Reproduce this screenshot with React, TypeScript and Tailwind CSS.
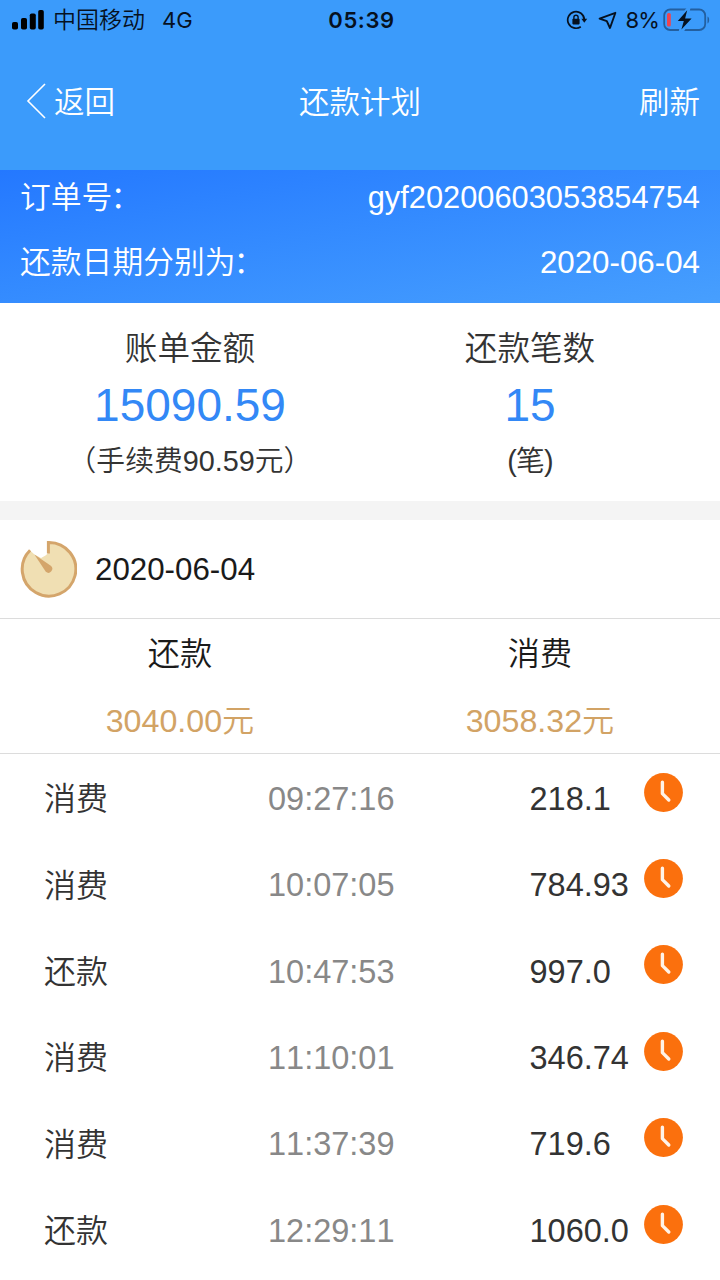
const records = [
  { type: "消费", time: "09:27:16", amount: "218.1" },
  { type: "消费", time: "10:07:05", amount: "784.93" },
  { type: "还款", time: "10:47:53", amount: "997.0" },
  { type: "消费", time: "11:10:01", amount: "346.74" },
  { type: "消费", time: "11:37:39", amount: "719.6" },
  { type: "还款", time: "12:29:11", amount: "1060.0" },
];

function SignalIcon() {
  return (
    <svg width="32" height="20" viewBox="0 0 32 20">
      <rect x="0" y="12" width="6" height="7.5" rx="1.8" />
      <rect x="9" y="8" width="6" height="11.5" rx="1.8" />
      <rect x="17.8" y="3.5" width="6" height="16" rx="1.8" />
      <rect x="26.2" y="0" width="5.6" height="19.5" rx="1.8" />
    </svg>
  );
}

function LockIcon() {
  return (
    <svg width="22" height="20" viewBox="0 0 22 20" fill="none" stroke="#06111f" strokeWidth="1.7">
      <path d="M18.3 9.5A8.3 8.3 0 1 0 14.8 16.7" />
      <path d="M15.4 8.8h5.8l-2.9 4z" fill="#06111f" stroke="none" />
      <rect x="6.4" y="8.8" width="7.2" height="5.6" rx="0.8" fill="#06111f" stroke="none" />
      <path d="M7.9 9V7.3a2.1 2.1 0 0 1 4.2 0V9" strokeWidth="1.4" />
    </svg>
  );
}

function LocationIcon() {
  return (
    <svg width="19" height="19" viewBox="0 0 19 19" fill="none" stroke="#06111f" strokeWidth="1.9" strokeLinejoin="round">
      <path d="M17.4 1.8 1.6 7.6l7.2 2.6 3.2 6.8z" />
    </svg>
  );
}

function BatteryIcon() {
  return (
    <svg width="48" height="24" viewBox="0 0 48 24">
      <rect x="1.2" y="1.5" width="41" height="20.5" rx="6" fill="none" stroke="#235f9f" strokeWidth="1.8" />
      <path d="M44.5 8.5c2.2.9 2.2 6 0 6.9z" fill="#235f9f" />
      <rect x="4" y="5" width="3.8" height="13.6" rx="1.6" fill="#ee4450" />
      <path d="M23.5 0 13 13.6h5.2L15.5 24h5L30 9.8h-5L27.5 0z" fill="#3b9bfb" />
      <path d="M24.2 2.2 14.8 13h6L18.4 21.6 28.6 10.4h-6.5z" fill="#06111f" />
    </svg>
  );
}

function TimerIcon() {
  return (
    <svg width="58" height="58" viewBox="0 0 58 58">
      <path
        d="M29.4 13V2.4A26.8 26.8 0 1 1 10.8 10.2L15.5 14.5 22 18 26.5 15.5z"
        fill="#f0dfb3"
      />
      <path
        d="M29.4 13.5V2.4A26.8 26.8 0 1 1 11.1 10.2"
        fill="none"
        stroke="#d4a56b"
        strokeWidth="3"
      />
      <path d="M15.4 14.6 31.8 25.8a3.9 3.9 0 0 1-5 6z" fill="#d4a56b" />
    </svg>
  );
}

function ClockIcon() {
  return (
    <svg width="39" height="39" viewBox="0 0 39 39">
      <circle cx="19.5" cy="19.5" r="19.4" fill="#fb700d" />
      <path
        d="M18.4 9.2v11.4l6.4 6.4"
        fill="none"
        stroke="#fff3e8"
        strokeWidth="3.4"
        strokeLinecap="round"
        strokeLinejoin="round"
      />
    </svg>
  );
}

export default function App() {
  return (
    <main className="flex h-[1280px] w-[720px] flex-col overflow-hidden bg-white font-['Liberation_Sans','Noto_Sans_CJK_SC',sans-serif] font-[350] text-[#333] [font-kerning:none]">
      <header className="h-[170px] bg-[#3b9bfb]">
        <div className="flex h-10 items-center pl-3 pr-[9px] font-['Inter','Noto_Sans_CJK_SC',sans-serif] font-normal text-[#06111f]">
          <div className="flex flex-1 items-center">
            <SignalIcon />
            <span className="ml-[9px] text-[23px] font-[350] leading-10">中国移动</span>
            <span className="ml-[17px] text-[22px] leading-10">4G</span>
          </div>
          <span className="text-[22px] font-semibold leading-10 tracking-[0.6px]">05:39</span>
          <div className="flex flex-1 items-center justify-end">
            <LockIcon />
            <span className="ml-2.5 mr-2">
              <LocationIcon />
            </span>
            <span className="mr-1 text-[22px] leading-10 tracking-[-0.8px]">8%</span>
            <BatteryIcon />
          </div>
        </div>
        <nav className="flex h-[126px] items-center px-5 text-[30.5px] text-white">
          <div className="flex flex-1 items-center">
            <svg className="mb-1" width="34" height="38" viewBox="0 0 34 38" fill="none" stroke="#fff" strokeWidth="1.6">
              <path d="M25 2 8 19l17 17" />
            </svg>
            <span>返回</span>
          </div>
          <h1 className="font-[350]">还款计划</h1>
          <span className="flex-1 text-right">刷新</span>
        </nav>
      </header>

      <section className="h-[133px] bg-linear-to-br from-[#2478ff] to-[#479ffe] px-5 pt-0.5 text-[30.8px] text-white">
        <div className="flex h-[53px] items-center justify-between">
          <span>
            订单号<span className="-ml-0.5">：</span>
          </span>
          <span>gyf20200603053854754</span>
        </div>
        <div className="flex h-[76px] items-center justify-between">
          <span>
            还款日期分别为<span className="-ml-0.5">：</span>
          </span>
          <span className="text-[31.3px]">2020-06-04</span>
        </div>
      </section>

      <section className="grid h-[198px] grid-cols-2 px-5 text-center">
        <div className="flex flex-col pt-[22px]">
          <span className="text-[32.6px] leading-[48px]">账单金额</span>
          <span className="text-[46px] leading-[64px] text-[#3388f6]">15090.59</span>
          <span className="text-[28.8px] leading-[48px]">（手续费90.59元）</span>
        </div>
        <div className="flex flex-col pt-[22px]">
          <span className="text-[32.6px] leading-[48px]">还款笔数</span>
          <span className="text-[46px] leading-[64px] text-[#3388f6]">15</span>
          <span className="text-[28.8px] leading-[48px] tracking-[-0.8px]">(笔)</span>
        </div>
      </section>

      <div className="h-[19px] bg-[#f4f4f4]" />

      <section className="flex h-[99px] items-center border-b border-[#dcdcdc] pl-[19px] text-[#1a1a1a]">
        <TimerIcon />
        <span className="ml-[18px] pt-[3px] text-[31.3px]">2020-06-04</span>
      </section>

      <section className="grid h-[135px] grid-cols-2 border-b border-[#dcdcdc] text-center text-[32.2px]">
        <div className="flex flex-col">
          <span className="leading-[71px] text-[#1a1a1a]">还款</span>
          <span className="leading-[63px] text-[#d2a365]">3040.00元</span>
        </div>
        <div className="flex flex-col">
          <span className="leading-[71px] text-[#1a1a1a]">消费</span>
          <span className="leading-[63px] text-[#d2a365]">3058.32元</span>
        </div>
      </section>

      <ul className="pt-0.5 text-[32.5px]">
        {records.map((item) => (
          <li key={item.time} className="flex h-[86.4px] items-center pl-11">
            <span className="w-[224px] text-[32px]">{item.type}</span>
            <span className="w-[261.5px] text-[#888]">{item.time}</span>
            <span className="w-[114.5px]">{item.amount}</span>
            <span className="mb-3.5">
              <ClockIcon />
            </span>
          </li>
        ))}
      </ul>
    </main>
  );
}
